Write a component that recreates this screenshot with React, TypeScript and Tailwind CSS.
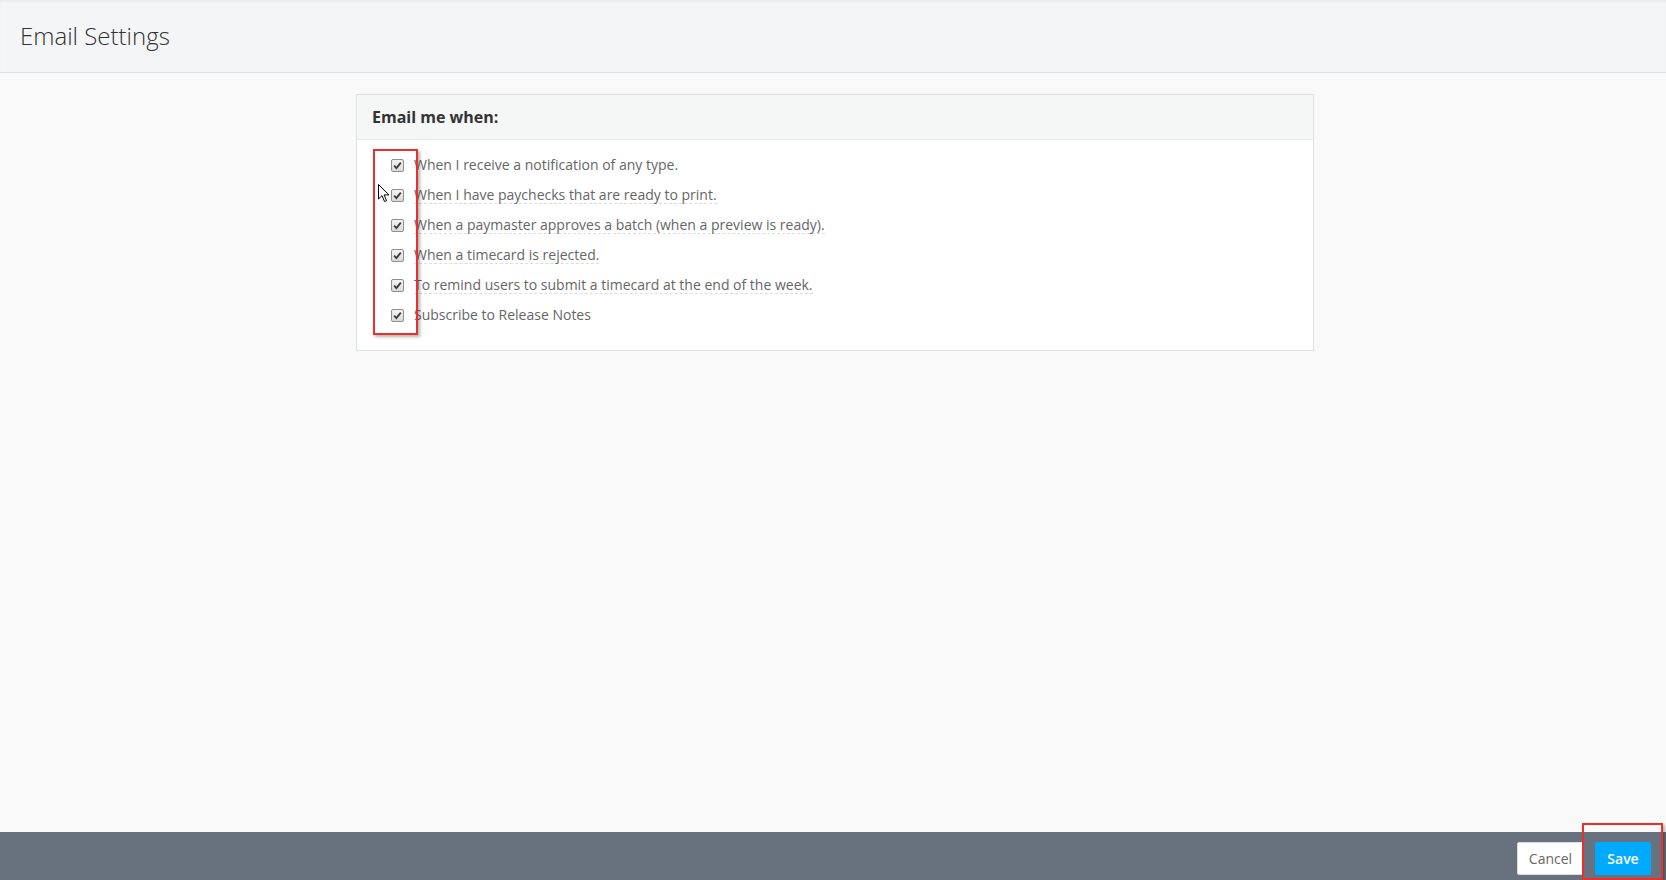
import React from "react";

const options = [
  { label: "When I receive a notification of any type.", dashed: false },
  { label: "When I have paychecks that are ready to print.", dashed: true },
  { label: "When a paymaster approves a batch (when a preview is ready).", dashed: true },
  { label: "When a timecard is rejected.", dashed: true },
  { label: "To remind users to submit a timecard at the end of the week.", dashed: true },
  { label: "Subscribe to Release Notes", dashed: false },
];

function Check() {
  return (
    <span className="flex h-[13px] w-[13px] shrink-0 items-center justify-center rounded-[2px] border border-[#8f8f8f] bg-gradient-to-b from-[#f4f4f4] to-[#d9d9d9]">
      <svg width="9" height="9" viewBox="0 0 9 9">
        <path d="M1.2 4.6 L3.4 7 L7.8 1.6" fill="none" stroke="#3b3b3b" strokeWidth="1.8" />
      </svg>
    </span>
  );
}

export default function App() {
  return (
    <div className="relative flex h-[880px] flex-col overflow-hidden bg-[#f9f9f9] font-['Open_Sans',sans-serif]">
      {/* header */}
      <div className="flex h-[73px] shrink-0 items-center border-b border-[#dfe1e3] bg-[#f4f5f6] pl-[20px] shadow-[inset_0_2px_2px_rgba(0,0,0,0.04)]">
        <h1 className="text-[24px] font-light text-[#333]">Email Settings</h1>
      </div>

      <div className="flex-1 pl-[4px] pt-[21px]">
        <div className="mx-auto w-[958px] border border-[#dde2e2] bg-white">
          <div className="flex h-[45px] items-center border-b border-[#e8ebeb] bg-[#f5f6f6] px-[15px]">
            <span className="text-[16px] font-bold text-[#333]">Email me when:</span>
          </div>
          <div className="pb-[20px] pt-[10px]">
            {options.map((o) => (
              <div key={o.label} className="flex h-[30px] items-center pl-[34px]">
                <Check />
                <span
                  className={
                    "ml-[10px] text-[14px] leading-[17px] text-[#666] border-b " +
                    (o.dashed ? "border-dashed border-[#dcdcdc]" : "border-transparent")
                  }
                >
                  {o.label}
                </span>
              </div>
            ))}
          </div>
        </div>
      </div>

      {/* footer */}
      <div className="flex h-[48px] shrink-0 items-start justify-end gap-[11px] bg-[#67727e] pr-[15px] pt-[10px]">
        <button className="h-[33px] w-[67px] rounded-[2px] border border-[#dcdcdc] bg-white text-[14px] text-[#666]">
          Cancel
        </button>
        <button className="h-[33px] w-[56px] rounded-[2px] bg-[#00aaff] text-[14px] font-semibold text-white">
          Save
        </button>
      </div>

      {/* annotation boxes */}
      <div className="absolute left-[373px] top-[149px] h-[186px] w-[45px] border-2 border-[#e8302c] shadow-[2px_2px_3px_rgba(0,0,0,0.3)]" />
      <div className="absolute left-[1582px] top-[823px] h-[57px] w-[81px] border-2 border-[#e8302c] shadow-[2px_2px_3px_rgba(0,0,0,0.3)]" />

      {/* mouse cursor */}
      <svg className="absolute left-[378px] top-[184px]" width="13" height="19" viewBox="0 0 13 19">
        <path d="M0.5 0.5 L0.5 15 L4 11.6 L6.6 17.6 L8.6 16.7 L6.1 10.9 L11 10.9 Z" fill="#fff" stroke="#000" strokeWidth="1" strokeLinejoin="round" />
      </svg>
    </div>
  );
}
